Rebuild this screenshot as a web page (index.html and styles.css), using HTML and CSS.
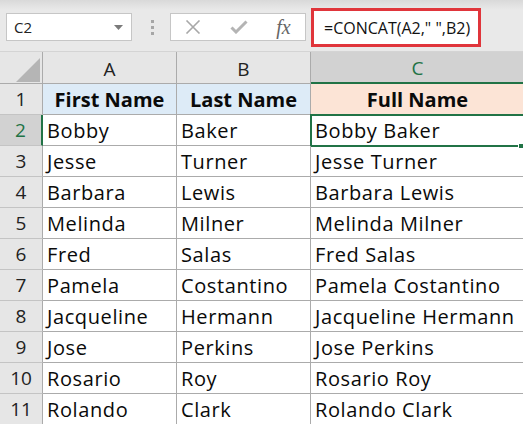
FILE: index.html
```html
<!DOCTYPE html>
<html>
<head>
<meta charset="utf-8">
<link rel="stylesheet" href="styles.css">
</head>
<body>
<div class="toolbar">
  <div class="namebox">
    <span class="nb-text">C2</span>
    <svg class="caret" width="9" height="5" viewBox="0 0 9 5"><path d="M0 0H9L4.5 5Z" fill="#7a7a7a"/></svg>
  </div>
  <div class="grip"><i></i><i></i><i></i></div>
  <div class="fbuttons">
    <svg class="ico" width="16" height="14" viewBox="0 0 16 14"><path d="M1.5 0.5L14.5 13.5M14.5 0.5L1.5 13.5" stroke="#a8a8a8" stroke-width="1.6" fill="none"/></svg>
    <svg class="ico" width="18" height="14" viewBox="0 0 18 14"><path d="M1.5 7.5L6 12L16.5 1.5" stroke="#b4b4b4" stroke-width="3" fill="none"/></svg>
    <span class="fx">fx</span>
  </div>
  <div class="formula">=CONCAT(A2," ",B2)</div>
</div>
<div class="sheet">
  <div class="corner"><span class="tri"></span></div>
  <div class="colh">A</div>
  <div class="colh">B</div>
  <div class="colh sel">C</div>

  <div class="rowh">1</div>
  <div class="cell hd blue">First Name</div>
  <div class="cell hd blue">Last Name</div>
  <div class="cell hd peach">Full Name</div>

  <div class="rowh sel">2</div>
  <div class="cell">Bobby</div>
  <div class="cell">Baker</div>
  <div class="cell active">Bobby Baker<span class="handle"></span></div>

  <div class="rowh">3</div>
  <div class="cell">Jesse</div>
  <div class="cell">Turner</div>
  <div class="cell">Jesse Turner</div>

  <div class="rowh">4</div>
  <div class="cell">Barbara</div>
  <div class="cell">Lewis</div>
  <div class="cell">Barbara Lewis</div>

  <div class="rowh">5</div>
  <div class="cell">Melinda</div>
  <div class="cell">Milner</div>
  <div class="cell">Melinda Milner</div>

  <div class="rowh">6</div>
  <div class="cell">Fred</div>
  <div class="cell">Salas</div>
  <div class="cell">Fred Salas</div>

  <div class="rowh">7</div>
  <div class="cell">Pamela</div>
  <div class="cell">Costantino</div>
  <div class="cell">Pamela Costantino</div>

  <div class="rowh">8</div>
  <div class="cell">Jacqueline</div>
  <div class="cell">Hermann</div>
  <div class="cell">Jacqueline Hermann</div>

  <div class="rowh">9</div>
  <div class="cell">Jose</div>
  <div class="cell">Perkins</div>
  <div class="cell">Jose Perkins</div>

  <div class="rowh">10</div>
  <div class="cell">Rosario</div>
  <div class="cell">Roy</div>
  <div class="cell">Rosario Roy</div>

  <div class="rowh">11</div>
  <div class="cell">Rolando</div>
  <div class="cell">Clark</div>
  <div class="cell">Rolando Clark</div>
</div>
</body>
</html>
```

FILE: styles.css
```css
* { box-sizing: border-box; }
html, body {
  margin: 0;
  padding: 0;
  width: 523px;
  height: 424px;
  overflow: hidden;
  background: #fff;
}
body {
  font-family: "Open Sans", "Liberation Sans", sans-serif;
  color: #111;
}
.toolbar {
  height: 52px;
  background: linear-gradient(#d9d9d9 0px, #e9e9e9 10px, #e9e9e9 100%);
  display: flex;
  align-items: flex-start;
}
.namebox {
  margin: 13px 0 0 6px;
  width: 126px;
  height: 28px;
  background: #fff;
  border: 1px solid #c6c6c6;
  display: flex;
  align-items: center;
  justify-content: space-between;
  padding: 0 8px 0 7px;
}
.nb-text {
  font-size: 15px;
  color: #222;
}
.grip {
  margin: 20px 0 0 19px;
  display: flex;
  flex-direction: column;
  gap: 3px;
}
.grip i {
  display: block;
  width: 3px;
  height: 3px;
  background: #a6a6a6;
}
.fbuttons {
  margin: 13px 0 0 16px;
  width: 136px;
  height: 28px;
  background: #fff;
  border: 1px solid #c6c6c6;
  display: flex;
  align-items: center;
  justify-content: space-around;
}
.fx {
  font-family: "Liberation Serif", serif;
  font-style: italic;
  font-size: 20px;
  color: #666;
  line-height: 1;
}
.formula {
  margin: 8px 0 0 5px;
  width: 170px;
  height: 39px;
  background: #fff;
  border: 3px solid #e0353b;
  font-size: 16px;
  color: #111;
  padding-left: 10px;
  display: flex;
  align-items: center;
}
.sheet {
  display: grid;
  grid-template-columns: 43px 134px 134px 214px;
  grid-template-rows: 32px repeat(11, 31px);
  font-size: 19px;
  border-top: 1px solid #d4d4d4;
  margin-top: -1px;
}
.corner {
  background: #e6e6e6;
  border-right: 1px solid #ababab;
  border-bottom: 1px solid #ababab;
  position: relative;
}
.tri {
  position: absolute;
  left: 16px;
  top: 6px;
  width: 0;
  height: 0;
  border-left: 24px solid transparent;
  border-bottom: 24px solid #b5b5b5;
}
.colh {
  background: #e6e6e6;
  border-right: 1px solid #ababab;
  border-bottom: 1px solid #ababab;
  display: flex;
  align-items: center;
  justify-content: center;
  color: #222;
  padding-top: 2px;
}
.colh.sel {
  background: #d2d2d2;
  color: #217346;
  border-bottom: 2px solid #217346;
}
.rowh {
  background: #e6e6e6;
  border-right: 1px solid #ababab;
  border-bottom: 1px solid #c4c4c4;
  display: flex;
  align-items: center;
  justify-content: center;
  color: #222;
}
.rowh.sel {
  background: #d2d2d2;
  color: #217346;
  border-right: 2px solid #217346;
}
.cell {
  border-right: 1px solid #ababab;
  border-bottom: 1px solid #ababab;
  display: flex;
  align-items: center;
  padding-left: 4px;
  white-space: nowrap;
  color: #0a0a0a;
  position: relative;
  font-size: 20px;
  letter-spacing: 0.6px;
}
.cell.hd {
  font-weight: bold;
  justify-content: center;
  padding-left: 0;
  letter-spacing: 0;
}
.cell.blue { background: #ddebf7; }
.cell.peach { background: #fce4d6; }
.cell.active {
  outline: 2px solid #217346;
  outline-offset: -1px;
}
.handle {
  position: absolute;
  right: 0;
  bottom: -4px;
  width: 6px;
  height: 6px;
  background: #217346;
  border: 1px solid #fff;
}
```
